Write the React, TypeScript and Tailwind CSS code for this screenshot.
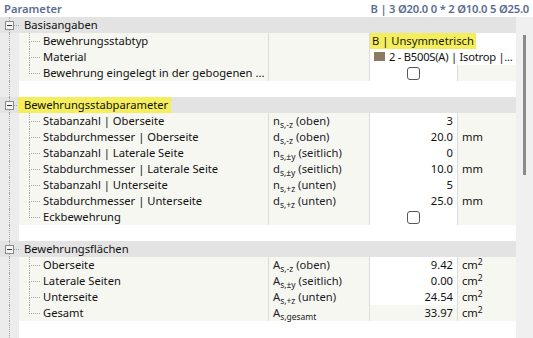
import React from "react";

type Cell = { sym?: React.ReactNode; value?: React.ReactNode; unit?: React.ReactNode; valueBg?: string; span?: boolean };
type Row = { name: string; cell: Cell };
type Section = { title: string; highlight?: boolean; rows: Row[] };

const S = ({ base, sub, rest }: { base: string; sub: string; rest?: string }) => (
  <span>
    {base}
    <sub className="text-[8.5px]">{sub}</sub>
    {rest ? ` ${rest}` : ""}
  </span>
);

const cm2 = (
  <span>
    cm<sup className="text-[8.5px]">2</sup>
  </span>
);

const Check = () => (
  <span className="inline-block w-[13px] h-[13px] rounded-[3px] border border-[#555] bg-white" />
);

const sections: Section[] = [
  {
    title: "Basisangaben",
    rows: [
      {
        name: "Bewehrungsstabtyp",
        cell: {
          span: true,
          value: (
            <span className="bg-[#f4ee5c] h-full flex items-center px-[2px] whitespace-nowrap text-[#1a1a1a]">B | Unsymmetrisch</span>
          ),
        },
      },
      {
        name: "Material",
        cell: {
          span: true,
          value: (
            <span className="flex items-center gap-[4px] pl-[4px] whitespace-nowrap tracking-[-0.25px]">
              <span className="w-[11px] h-[9px] bg-[#8c7b63]" />
              2 - B500S(A) | Isotrop |...
            </span>
          ),
        },
      },
      { name: "Bewehrung eingelegt in der gebogenen ...", cell: { value: <Check />, unit: "" } },
    ],
  },
  {
    title: "Bewehrungsstabparameter",
    highlight: true,
    rows: [
      { name: "Stabanzahl | Oberseite", cell: { sym: <S base="n" sub="s,-z" rest="(oben)" />, value: "3", unit: "" } },
      { name: "Stabdurchmesser | Oberseite", cell: { sym: <S base="d" sub="s,-z" rest="(oben)" />, value: "20.0", unit: "mm" } },
      { name: "Stabanzahl | Laterale Seite", cell: { sym: <S base="n" sub="s,±y" rest="(seitlich)" />, value: "0", unit: "" } },
      { name: "Stabdurchmesser | Laterale Seite", cell: { sym: <S base="d" sub="s,±y" rest="(seitlich)" />, value: "10.0", unit: "mm" } },
      { name: "Stabanzahl | Unterseite", cell: { sym: <S base="n" sub="s,+z" rest="(unten)" />, value: "5", unit: "" } },
      { name: "Stabdurchmesser | Unterseite", cell: { sym: <S base="d" sub="s,+z" rest="(unten)" />, value: "25.0", unit: "mm" } },
      { name: "Eckbewehrung", cell: { value: <Check />, unit: "" } },
    ],
  },
  {
    title: "Bewehrungsflächen",
    rows: [
      { name: "Oberseite", cell: { sym: <S base="A" sub="s,-z" rest="(oben)" />, value: "9.42", unit: cm2 } },
      { name: "Laterale Seiten", cell: { sym: <S base="A" sub="s,±y" rest="(seitlich)" />, value: "0.00", unit: cm2 } },
      { name: "Unterseite", cell: { sym: <S base="A" sub="s,+z" rest="(unten)" />, value: "24.54", unit: cm2 } },
      { name: "Gesamt", cell: { sym: <S base="A" sub="s,gesamt" />, value: "33.97", unit: cm2, valueBg: "bg-[#f7f7f1]" } },
    ],
  },
];

function Gutter({ box }: { box?: boolean }) {
  if (!box) {
    return (
      <div className="w-[19px] shrink-0 self-stretch bg-[#ececec]">
        <div className="ml-[9px] h-full border-l border-dotted border-[#a5a5a5]" />
      </div>
    );
  }
  return (
    <div className="w-[19px] shrink-0 self-stretch flex flex-col items-start">
      <div className="ml-[9px] flex-1 border-l border-dotted border-[#a5a5a5]" />
      <div className="flex items-center">
        <div className="ml-[5px] w-[9px] h-[9px] border border-[#8a8a8a] bg-[#f4f4f4] flex items-center justify-center">
          <div className="w-[5px] h-px bg-[#333]" />
        </div>
        <div className="w-[5px] border-t border-dotted border-[#a5a5a5]" />
      </div>
      <div className="ml-[9px] flex-1 border-l border-dotted border-[#a5a5a5]" />
    </div>
  );
}

function Connector({ last }: { last: boolean }) {
  return (
    <div className="w-[11px] ml-[10px] shrink-0 self-stretch flex flex-col">
      <div className="flex-1 border-l border-b border-dotted border-[#a5a5a5]" />
      <div className={`flex-1 ${last ? "" : "border-l border-dotted border-[#a5a5a5]"}`} />
    </div>
  );
}

export default function App() {
  return (
    <div className="w-[533px] h-[338px] bg-white overflow-hidden text-[11.2px] leading-none text-[#111] font-['Noto_Sans',sans-serif]">
      <div className="h-[17px] flex items-center justify-between px-[4px] text-[#5b6d92] font-semibold">
        <span>Parameter</span>
        <span className="tracking-[-0.2px]">B | 3 Ø20.0 0 * 2 Ø10.0 5 Ø25.0</span>
      </div>
      <div className="flex h-[321px]">
        <div className="w-[516px] flex flex-col">
          {sections.map((sec, si) => (
            <div key={sec.title} className="flex flex-col">
              {si > 0 && (
                <div className="h-[16px] flex">
                  <Gutter />
                  <div className="flex-1 bg-white" />
                </div>
              )}
              <div className="h-[16px] flex items-center bg-[#e3e3e3]">
                <Gutter box />
                <span className={`h-full flex items-center pl-[6px] pr-[3px] -ml-[1px] ${sec.highlight ? "bg-[#f4ee5c]" : ""}`}>
                  {sec.title}
                </span>
              </div>
              {sec.rows.map((r, ri) => (
                <div key={r.name} className="h-[16px] flex">
                  <Gutter />
                  <div className="w-[249px] flex items-center bg-[#f7f7f1] overflow-hidden">
                    <Connector last={ri === sec.rows.length - 1} />
                    <span className="ml-[3px] whitespace-nowrap">{r.name}</span>
                  </div>
                  <div className="w-[101px] flex items-center bg-[#f7f7f1] border-l border-[#dcdcdc] pl-[4px] whitespace-nowrap text-[#1a1a2a]">
                    {r.cell.sym}
                  </div>
                  {r.cell.span ? (
                    <div className="flex-1 flex items-center bg-white border-l border-[#dcdcdc] overflow-hidden">{r.cell.value}</div>
                  ) : (
                    <>
                      <div
                        className={`w-[88px] flex items-center ${
                          typeof r.cell.value === "string" ? "justify-end pr-[4px]" : "justify-center"
                        } ${r.cell.valueBg ?? "bg-white"} border-l border-[#dcdcdc]`}
                      >
                        {r.cell.value}
                      </div>
                      <div className="flex-1 flex items-center bg-[#f7f7f1] border-l border-[#dcdcdc] pl-[4px]">
                        {r.cell.unit}
                      </div>
                    </>
                  )}
                </div>
              ))}
            </div>
          ))}
          <div className="flex-1 flex">
            <Gutter />
            <div className="flex-1 bg-white" />
          </div>
        </div>
        <div className="w-[17px] bg-[#f0f0f0] pt-[18px]">
          <div className="ml-[7px] w-[3px] h-[140px] bg-[#8a8a8a]" />
        </div>
      </div>
    </div>
  );
}
